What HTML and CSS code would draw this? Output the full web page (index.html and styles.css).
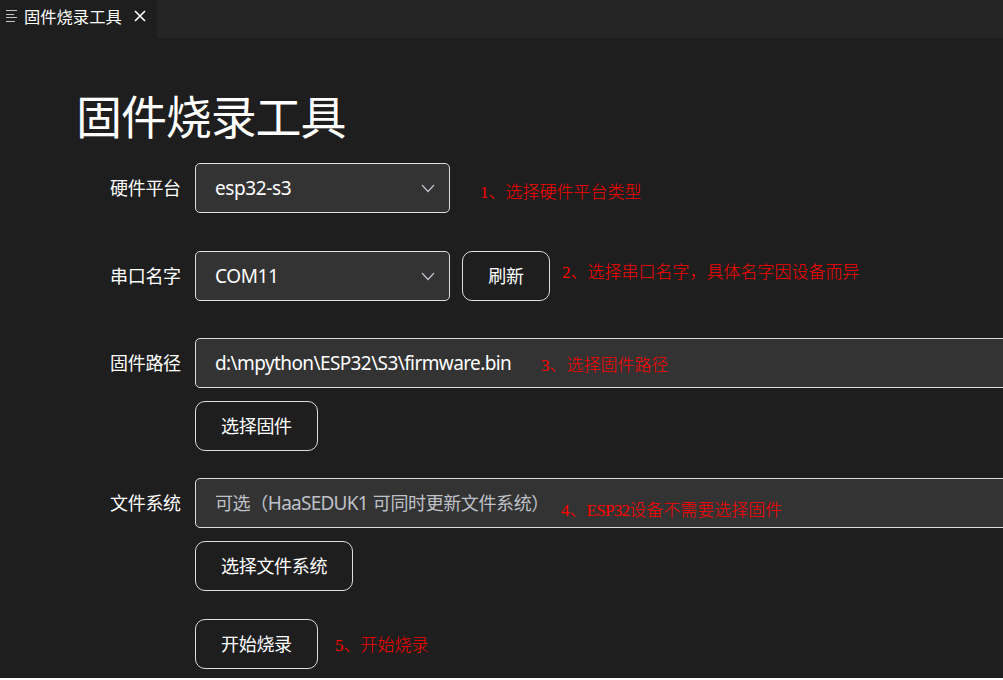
FILE: index.html
```html
<!DOCTYPE html>
<html lang="zh-CN">
<head>
<meta charset="utf-8">
<title>固件烧录工具</title>
<link rel="stylesheet" href="styles.css">
</head>
<body>
<div class="window">
<header class="tabs">
  <div class="tab">
    <svg class="tab-icon" width="11" height="12" viewBox="0 0 11 12" shape-rendering="crispEdges"><path d="M0 .5h11M0 4.5h8M0 7.5h11M0 11.5h9" stroke="#c4c4c4" fill="none"/></svg>
    <span class="tab-name">固件烧录工具</span>
    <svg class="tab-close" width="12" height="12" viewBox="0 0 12 12"><path d="M1 1l10 10M11 1L1 11" stroke="#fff" stroke-width="1.6" fill="none"/></svg>
  </div>
</header>
<main class="page">
  <h1 class="title">固件烧录工具</h1>
  <form class="form">
    <div class="row">
      <span class="label">硬件平台</span>
      <div class="field select"><span class="platform">esp32-s3</span><svg class="chevron" width="14" height="9" viewBox="0 0 14 9"><path d="M1 1l6 6.5L13 1" stroke="#bfc1c9" stroke-width="1.2" fill="none"/></svg></div>
      <span class="note note-1"><span class="half">1</span>、选择硬件平台类型</span>
    </div>
    <div class="row row-port">
      <span class="label">串口名字</span>
      <div class="field select"><span class="port">COM11</span><svg class="chevron" width="14" height="9" viewBox="0 0 14 9"><path d="M1 1l6 6.5L13 1" stroke="#bfc1c9" stroke-width="1.2" fill="none"/></svg></div>
      <button type="button" class="button refresh">刷新</button>
      <span class="note note-2"><span class="half">2</span>、选择串口名字，具体名字因设备而异</span>
    </div>
    <div class="row row-path">
      <span class="label">固件路径</span>
      <div class="field wide"><span class="path">d:\mpython\ESP32\S3\firmware.bin</span></div>
      <span class="note note-3"><span class="half">3</span>、选择固件路径</span>
    </div>
    <div class="row row-action"><button type="button" class="button">选择固件</button></div>
    <div class="row row-fs">
      <span class="label">文件系统</span>
      <div class="field wide placeholder"><span class="cn">可选（</span><span class="board">HaaSEDUK1</span><span class="cn">可同时更新文件系统）</span></div>
      <span class="note note-4"><span class="half">4</span>、<span class="half model">ESP32</span>设备不需要选择固件</span>
    </div>
    <div class="row row-action"><button type="button" class="button">选择文件系统</button></div>
    <div class="row row-start">
      <button type="button" class="button">开始烧录</button>
      <span class="note note-5"><span class="half">5</span>、开始烧录</span>
    </div>
  </form>
</main>
</div>
</body>
</html>
```
FILE: styles.css
```css
* { box-sizing: border-box; }
body { margin: 0; background: #fff; }
.window {
  height: 678px;
  overflow: hidden;
  background: #1e1e1e;
  color: #fff;
  font-family: "Noto Sans", "Noto Sans CJK SC", sans-serif;
  font-size: 18px;
}
.tabs { height: 38px; background: #252526; }
.tab {
  display: flex;
  align-items: center;
  width: 157px;
  height: 38px;
  padding: 0 0 6px 6px;
  background: #1e1e1e;
}
.tab-icon { margin-right: 7px; }
.tab-name {
  width: 98px;
  margin-right: 12px;
  font: 16.3px/24px "Noto Sans CJK SC", sans-serif;
  white-space: nowrap;
}
.page { padding: 46px 0 0 76px; }
.title {
  height: 60px;
  margin: 0;
  font: 400 46px/60px "Noto Sans CJK SC", sans-serif;
  letter-spacing: -1.1px;
  white-space: nowrap;
}
.form { margin: 19px 0 0 1px; }
.row { position: relative; display: flex; height: 50px; padding-left: 33px; }
.row-port { margin-top: 38px; }
.row-path { margin-top: 37px; }
.row-action { margin-top: 13px; padding-left: 118px; }
.row-fs { margin-top: 27px; }
.row-start { margin-top: 28px; padding-left: 118px; }
.label {
  flex: none;
  width: 85px;
  font: 18px/48px "Noto Sans CJK SC", sans-serif;
  letter-spacing: -0.3px;
}
.field {
  flex: none;
  display: flex;
  align-items: center;
  padding: 0 14px 0 19px;
  height: 50px;
  border: 1px solid #dcdce4;
  border-radius: 5px;
  background: #333;
  white-space: nowrap;
}
.select { width: 255px; justify-content: space-between; }
.wide { width: 840px; }
.platform, .port, .path, .board { font-family: "Noto Sans", sans-serif; font-size: 19px; }
.platform { letter-spacing: -0.4px; }
.port { letter-spacing: -0.4px; }
.path { letter-spacing: -0.6px; }
.placeholder { color: #bfc1c9; }
.cn { padding-bottom: 2px; font-family: "Noto Sans CJK SC", sans-serif; letter-spacing: -0.4px; }
.board { margin-right: 5px; letter-spacing: -0.75px; }
.button {
  height: 50px;
  padding: 0 25px 2px;
  border: 1px solid #dcdce4;
  border-radius: 10px;
  background: transparent;
  color: #fff;
  font: 18px/46px "Noto Sans CJK SC", sans-serif;
  letter-spacing: -0.3px;
  white-space: nowrap;
}
.refresh { width: 88px; margin-left: 12px; }
.note {
  position: absolute;
  color: #f00;
  font: 300 17px/24px "Noto Sans CJK SC", sans-serif;
  white-space: nowrap;
}
.half { font-family: "Liberation Serif", serif; font-size: 17px; }
.model { letter-spacing: -0.7px; }
.note-1 { left: 403px; top: 16px; }
.note-2 { left: 485px; top: 8px; }
.note-3 { left: 464px; top: 14px; }
.note-4 { left: 484px; top: 19px; }
.note-5 { left: 258px; top: 13px; }
```
